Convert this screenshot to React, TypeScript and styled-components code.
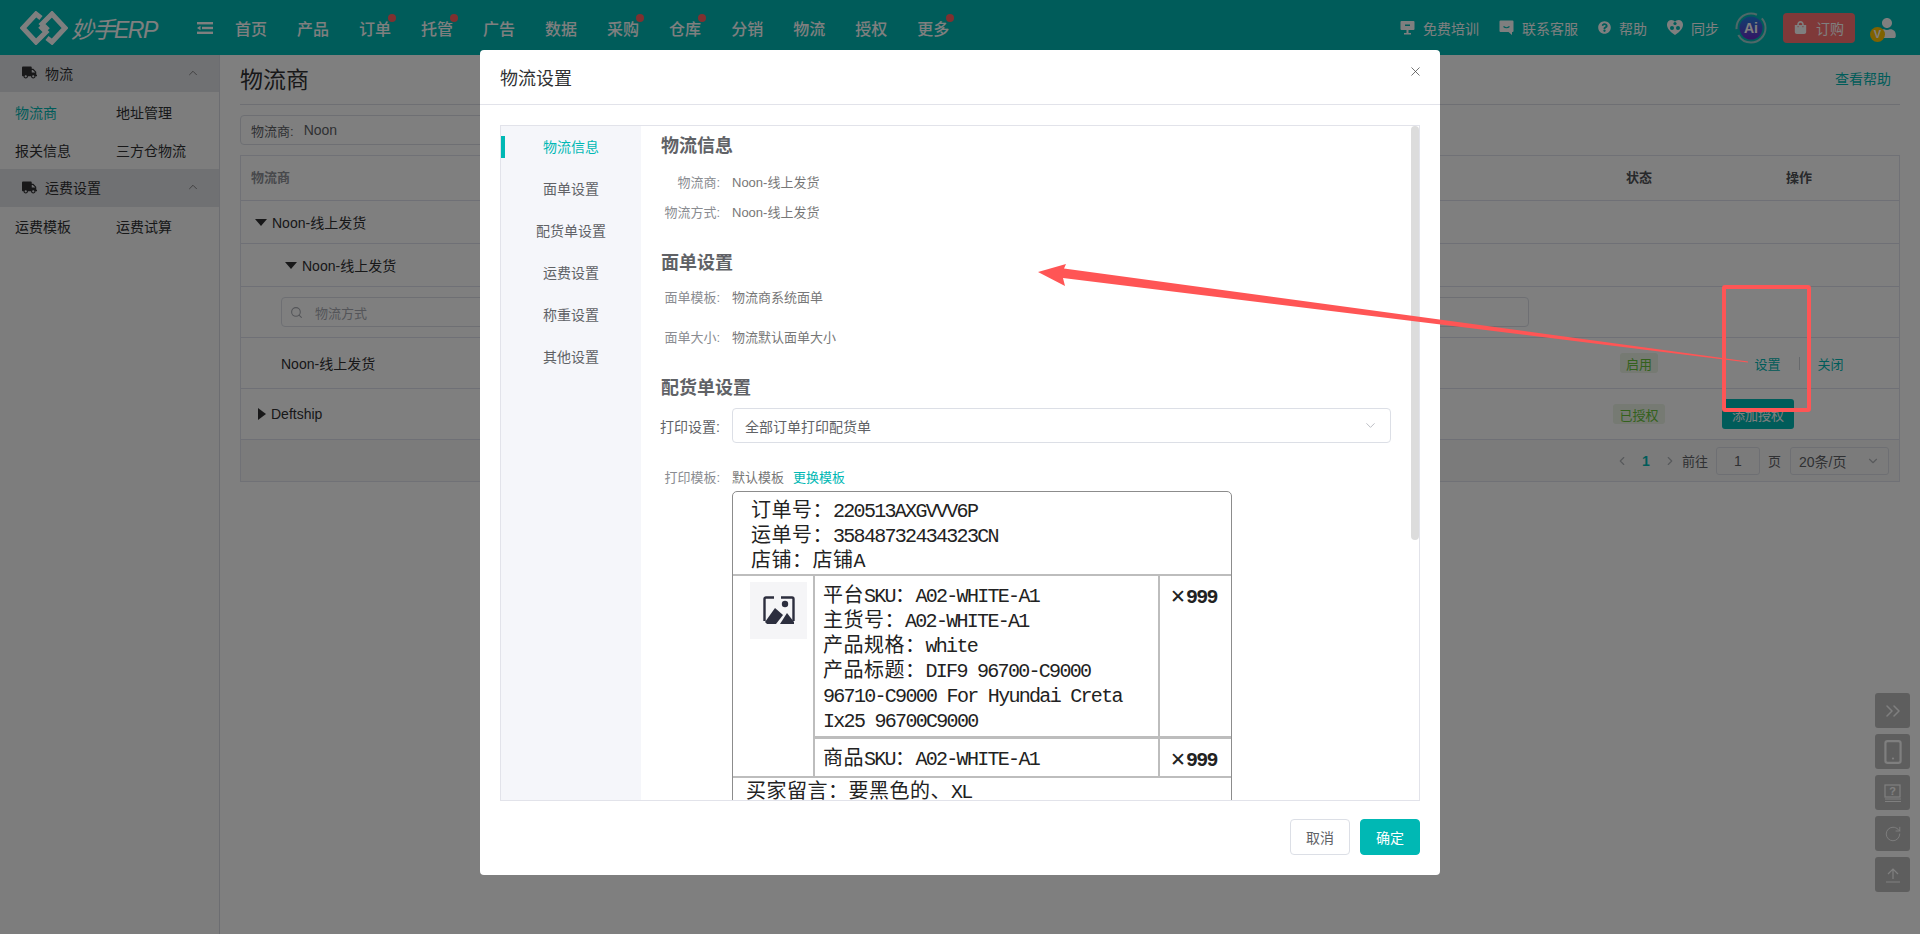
import React from "react";
import styled, { createGlobalStyle } from "styled-components";
import {
	ChevronDown,
	ChevronLeft,
	ChevronRight,
	ChevronUp,
	ChevronsRight,
	RotateCw,
	Search,
	Smartphone,
	X,
} from "lucide-react";
import {
	FaQuestionCircle,
	FaShoppingBag,
	FaTruck,
	FaUser,
} from "react-icons/fa";

const TEAL = "#00b8b4";
const FONT = `"Liberation Sans", "Noto Sans CJK SC", sans-serif`;
const COLON = "\uff1a";

const GlobalStyle = createGlobalStyle`
	html, body {
		margin: 0;
		height: 100%;
		overflow: hidden;
		background: #fff;
		font-family: ${FONT};
	}
	* {
		box-sizing: border-box;
	}
`;

const Page = styled.div`
	position: relative;
	width: 1920px;
	height: 934px;
	overflow: hidden;
	display: flex;
	flex-direction: column;
`;

/* top bar */
const TopBar = styled.header`
	height: 55px;
	flex: none;
	display: flex;
	align-items: center;
	padding-left: 20px;
	background: ${TEAL};
	color: #fff;
`;

const Logo = styled.div`
	width: 177px;
	display: flex;
	align-items: center;
	gap: 3px;
`;

const LogoText = styled.span`
	font-size: 23px;
	font-style: italic;
	letter-spacing: -1.5px;
`;

const Menu = styled.nav`
	display: flex;
	align-self: stretch;
	margin-left: 7px;
`;

const MenuItem = styled.div<{ $dot?: boolean }>`
	position: relative;
	display: flex;
	align-items: center;
	padding: 0 15px;
	font-size: 16px;
	font-weight: 500;

	${(p) =>
		p.$dot &&
		`&::after {
			content: "";
			position: absolute;
			top: 14px;
			right: 10px;
			width: 8px;
			height: 8px;
			border-radius: 50%;
			background: #ff6060;
		}`}
`;

const Tools = styled.div`
	margin-left: auto;
	display: flex;
	align-items: center;
	padding-right: 23px;
`;

const Tool = styled.div`
	display: flex;
	align-items: center;
	gap: 8px;
	margin-right: 20px;
	font-size: 14px;
`;

const AiSlot = styled.div`
	display: flex;
	margin-left: -4px;
`;

const OrderButton = styled.div`
	width: 72px;
	height: 30px;
	margin: 0 15px 0 16px;
	display: flex;
	align-items: center;
	justify-content: center;
	gap: 9px;
	border-radius: 4px;
	background: #ff7272;
	font-size: 14px;
`;

const UserBox = styled.div`
	position: relative;
	width: 27px;
	height: 30px;
	display: flex;
	justify-content: flex-end;
	align-items: center;
`;

const VipBadge = styled.span`
	position: absolute;
	left: 0;
	bottom: 1px;
	width: 15px;
	height: 15px;
	border-radius: 50%;
	background: #ffc400;
	font-size: 11px;
	font-weight: 700;
	line-height: 15px;
	text-align: center;
`;

/* page behind the dialog */
const Body = styled.div`
	flex: 1;
	display: flex;
	min-height: 0;
`;

const Sidebar = styled.aside`
	width: 220px;
	flex: none;
	background: #fafafa;
	border-right: 1px solid #d9dbe2;
`;

const SideHead = styled.div<{ $h: number }>`
	height: ${(p) => p.$h}px;
	display: flex;
	align-items: center;
	padding: 0 19px 2px 22px;
	gap: 8px;
	background: #e1e2e6;
	color: #303133;
	font-size: 14px;

	svg:last-child {
		margin-left: auto;
		color: #666;
	}
`;

const SideGrid = styled.div<{ $pt: number }>`
	display: grid;
	grid-template-columns: 101px 101px;
	grid-auto-rows: 38px;
	padding: ${(p) => p.$pt}px 0 0 15px;
`;

const SideLink = styled.div<{ $active?: boolean }>`
	display: flex;
	align-items: center;
	font-size: 14px;
	color: ${(p) => (p.$active ? TEAL : "#303133")};
`;

const Main = styled.main`
	flex: 1;
	min-width: 0;
	padding: 0 20px;
`;

const TitleBar = styled.div`
	height: 50px;
	display: flex;
	align-items: center;
	justify-content: space-between;
	padding: 0 9px 3px 0;
	border-bottom: 1px solid #dcdfe6;
`;

const PageTitle = styled.h1`
	margin: 0;
	font-size: 23px;
	font-weight: 400;
	color: #303133;
`;

const HelpLink = styled.span`
	font-size: 14px;
	color: ${TEAL};
`;

const FilterBox = styled.div`
	width: 400px;
	height: 30px;
	margin-top: 10px;
	display: flex;
	align-items: center;
	padding-left: 10px;
	gap: 10px;
	border: 1px solid #dcdfe6;
	border-radius: 4px;
	font-size: 13px;
	color: #606266;
`;

const FilterValue = styled.span`
	font-size: 14px;
`;

const Table = styled.div`
	margin-top: 10px;
	border: 1px solid #e1e3ec;
`;

const Row = styled.div<{ $h: number }>`
	height: ${(p) => p.$h}px;
	display: flex;
	align-items: center;
	border-bottom: 1px solid #dfe1ec;
	font-size: 14px;
	color: #303133;
`;

const HeadRow = styled(Row)`
	padding-bottom: 3px;
`;

const NameCell = styled.div<{ $indent: number }>`
	flex: 1;
	min-width: 0;
	display: flex;
	align-items: center;
	gap: 5px;
	padding-left: ${(p) => p.$indent}px;
`;

const HeadName = styled(NameCell)`
	font-size: 13px;
	font-weight: 700;
	color: #909399;
`;

const StatusCell = styled.div`
	width: 120px;
	flex: none;
	display: flex;
	justify-content: center;
`;

const OpsCell = styled.div<{ $start?: boolean }>`
	width: 200px;
	flex: none;
	display: flex;
	align-items: center;
	justify-content: ${(p) => (p.$start ? "flex-start" : "center")};
	padding-left: ${(p) => (p.$start ? 23 : 0)}px;
`;

const HeadCell = styled.span`
	font-size: 13px;
	font-weight: 700;
	color: #505257;
`;

const Caret = styled.span<{ $dir: "down" | "right" }>`
	width: 0;
	height: 0;
	border-style: solid;
	${(p) =>
		p.$dir === "down"
			? `border-width: 7px 6px 0 6px;
				border-color: #303133 transparent transparent transparent;`
			: `border-width: 6px 0 6px 8px;
				border-color: transparent transparent transparent #303133;`}
`;

const SearchBox = styled.div`
	width: 1248px;
	height: 30px;
	display: flex;
	align-items: center;
	gap: 12px;
	padding-left: 8px;
	border: 1px solid #dcdfe6;
	border-radius: 4px;
	font-size: 13px;
	color: #a8abb2;
`;

const Tag = styled.span`
	height: 20px;
	padding: 0 6px;
	display: flex;
	align-items: center;
	border-radius: 3px;
	background: #ecf5e6;
	color: #67c23a;
	font-size: 13px;
`;

const OpLink = styled.span`
	font-size: 13px;
	color: ${TEAL};
`;

const OpDivider = styled.span`
	width: 1px;
	height: 13px;
	margin: 0 18px;
	background: #cfd2d8;
`;

const TealButton = styled.button`
	width: 72px;
	height: 30px;
	padding: 0;
	border: none;
	border-radius: 3px;
	background: ${TEAL};
	color: #fff;
	font-family: ${FONT};
	font-size: 13px;
`;

const Pager = styled.div`
	height: 41px;
	display: flex;
	align-items: center;
	justify-content: flex-end;
	padding-right: 10px;
	background: #f7f7f7;
	font-size: 13px;
	color: #606266;
`;

const PageNum = styled.span`
	width: 34px;
	text-align: center;
	font-size: 14px;
	font-weight: 700;
	color: ${TEAL};
`;

const PagerText = styled.span<{ $ml: number }>`
	margin-left: ${(p) => p.$ml}px;
`;

const PagerBox = styled.div<{ $w: number; $ml: number }>`
	width: ${(p) => p.$w}px;
	height: 28px;
	margin-left: ${(p) => p.$ml}px;
	display: flex;
	align-items: center;
	justify-content: space-between;
	padding: 0 8px;
	border: 1px solid #dcdfe6;
	border-radius: 3px;
	font-size: 14px;

	svg {
		color: #b0b3b8;
	}
`;

const PagerInput = styled(PagerBox)`
	justify-content: center;
`;

/* floating side buttons */
const FloatBar = styled.div`
	position: absolute;
	top: 693px;
	right: 10px;
	display: flex;
	flex-direction: column;
	gap: 6px;
`;

const FloatButton = styled.div`
	width: 35px;
	height: 35px;
	display: flex;
	align-items: center;
	justify-content: center;
	border-radius: 3px;
	background: #bdbdbd;
	color: #fff;
`;

/* dialog */
const Mask = styled.div`
	position: absolute;
	inset: 0;
	display: flex;
	justify-content: center;
	padding-top: 50px;
	background: rgba(0, 0, 0, 0.5);
`;

const Dialog = styled.section`
	width: 960px;
	height: 825px;
	display: flex;
	flex-direction: column;
	border-radius: 4px;
	background: #fff;
`;

const DialogHead = styled.div`
	height: 55px;
	flex: none;
	display: flex;
	align-items: center;
	justify-content: space-between;
	padding: 0 17px 0 20px;
	border-bottom: 1px solid #e2e3ea;
	font-size: 18px;
	color: #303133;

	svg {
		color: #444;
		margin-top: -12px;
	}
`;

const DialogBody = styled.div`
	padding: 20px 20px 0;
`;

const Panel = styled.div`
	position: relative;
	height: 676px;
	display: flex;
	overflow: hidden;
	border: 1px solid #e2e3ea;
`;

const SideNav = styled.div`
	width: 140px;
	flex: none;
	background: #f5f6fa;
`;

const SideNavItem = styled.div<{ $active?: boolean }>`
	position: relative;
	height: 42px;
	line-height: 42px;
	text-align: center;
	font-size: 14px;
	color: ${(p) => (p.$active ? TEAL : "#606266")};

	${(p) =>
		p.$active &&
		`&::before {
			content: "";
			position: absolute;
			left: 0;
			top: 10px;
			width: 4px;
			height: 22px;
			background: ${TEAL};
		}`}
`;

const Content = styled.div`
	flex: 1;
	min-width: 0;
	padding: 8px 0 0 20px;
`;

const SectionTitle = styled.h3<{ $mt: number; $mb: number }>`
	margin: ${(p) => p.$mt}px 0 ${(p) => p.$mb}px;
	font-size: 18px;
	font-weight: 700;
	line-height: 24px;
	color: #606266;
`;

const Field = styled.div<{ $h: number }>`
	height: ${(p) => p.$h}px;
	display: flex;
	align-items: center;
	margin-left: -1px;
	font-size: 13px;
	color: #777;
`;

const FieldLabel = styled.span`
	width: 60px;
	flex: none;
	margin-right: 12px;
	text-align: right;
	white-space: nowrap;
	color: #8a8c91;
`;

const SelectRow = styled.div`
	height: 35px;
	display: flex;
	align-items: center;
	margin: 8px 0 0 -1px;
`;

const SelectLabel = styled(FieldLabel)`
	font-size: 14px;
	color: #606266;
`;

const SelectBox = styled.div`
	width: 659px;
	height: 35px;
	display: flex;
	align-items: center;
	justify-content: space-between;
	padding: 0 12px;
	border: 1px solid #dcdfe6;
	border-radius: 4px;
	font-size: 14px;
	color: #606266;

	svg {
		color: #b6b9bf;
	}
`;

const TemplateField = styled(Field)`
	margin-top: 23px;
`;

const ChangeLink = styled.span`
	margin-left: 9px;
	color: ${TEAL};
`;

/* print template preview */
const Template = styled.div`
	width: 500px;
	margin: 5px 0 0 71px;
	border: 1px solid #8c8c8c;
	border-radius: 5px;
	font-family: "Liberation Mono", "Noto Sans CJK SC", monospace;
	font-size: 20px;
	line-height: 25px;
	color: #222;
`;

const TplHead = styled.div`
	height: 84px;
	padding: 7px 0 0 18px;
	border-bottom: 2px solid #bdbdbd;
`;

const TplLine = styled.div`
	white-space: nowrap;
	letter-spacing: 0.5px;
`;

const Latin = styled.span`
	letter-spacing: -1.7px;
`;

const TplBody = styled.div`
	display: flex;
	border-bottom: 2px solid #bdbdbd;
`;

const TplThumb = styled.div`
	width: 82px;
	flex: none;
	padding: 6px 0 0 17px;
	border-right: 2px solid #bdbdbd;
`;

const ThumbBox = styled.div`
	width: 57px;
	height: 57px;
	display: flex;
	align-items: center;
	justify-content: center;
	background: #f5f5f7;
`;

const TplItems = styled.div`
	flex: 1;
	min-width: 0;
`;

const TplItem = styled.div<{ $h: number; $line?: boolean }>`
	height: ${(p) => p.$h}px;
	display: flex;
	border-bottom: ${(p) => (p.$line ? "3px solid #bdbdbd" : "none")};
`;

const TplLines = styled.div`
	width: 345px;
	flex: none;
	padding: 8px 0 0 8px;
	border-right: 2px solid #bdbdbd;
`;

const TplQty = styled.div`
	padding: 8px 0 0 10px;
	font-weight: 700;
	white-space: nowrap;
`;

const QtyMark = styled.span`
	font-family: "DejaVu Sans", sans-serif;
	font-size: 19px;
	font-weight: 400;
`;

const TplNote = styled.div`
	height: 60px;
	padding: 2px 0 0 13px;
	letter-spacing: 0.5px;
`;

const ScrollThumb = styled.div`
	position: absolute;
	top: 0;
	right: 0;
	width: 8px;
	height: 414px;
	border-radius: 4px;
	background: #dcdcdc;
`;

const DialogFoot = styled.div`
	display: flex;
	justify-content: flex-end;
	gap: 10px;
	padding: 18px 20px 0;
`;

const FootButton = styled.button<{ $primary?: boolean }>`
	width: 60px;
	height: 36px;
	padding: 0;
	border-radius: 4px;
	border: 1px solid ${(p) => (p.$primary ? TEAL : "#dcdfe6")};
	background: ${(p) => (p.$primary ? TEAL : "#fff")};
	color: ${(p) => (p.$primary ? "#fff" : "#606266")};
	font-family: ${FONT};
	font-size: 14px;
`;

/* red markup drawn on top of the screenshot */
const Markup = styled.svg`
	position: absolute;
	left: 0;
	top: 0;
	pointer-events: none;
`;

const LogoMark = () => (
	<svg width="48" height="34" viewBox="0 0 48 34" fill="none" stroke="#fff" strokeWidth="5">
		<path d="M21 7 L16 3 L3 17 L16 31 L26 21 L20 15" />
		<path d="M27 27 L32 31 L45 17 L32 3 L22 13 L28 19" />
	</svg>
);

const ListIcon = () => (
	<svg width="16" height="12" viewBox="0 0 16 12" fill="#fff">
		<rect x="0" y="0" width="16" height="2.4" />
		<rect x="5" y="4.8" width="11" height="2.4" />
		<rect x="0" y="9.6" width="16" height="2.4" />
		<path d="M0 6 L3.5 3.8 V8.2 Z" />
	</svg>
);

const TrainIcon = () => (
	<svg width="15" height="15" viewBox="0 0 15 15" fill="#fff">
		<path d="M1.5 1h12a1 1 0 0 1 1 1v7a1 1 0 0 1-1 1h-12a1 1 0 0 1-1-1V2a1 1 0 0 1 1-1z" />
		<rect x="6.5" y="10" width="2" height="3" />
		<rect x="4" y="13" width="7" height="1.5" />
		<rect x="5" y="4.5" width="5" height="1.5" fill={TEAL} />
	</svg>
);

const ChatIcon = () => (
	<svg width="15" height="15" viewBox="0 0 15 15" fill="#fff">
		<path d="M1.5 0.5h12a1 1 0 0 1 1 1v9.5a1 1 0 0 1-1 1H13v3l-3.5-3h-8a1 1 0 0 1-1-1V1.5a1 1 0 0 1 1-1z" />
		<path d="M4.5 6.5q3 2.5 6 0" stroke={TEAL} strokeWidth="1.2" fill="none" />
	</svg>
);

const SyncIcon = () => (
	<svg width="16" height="15" viewBox="0 0 16 15" fill="#fff">
		<path d="M8 15C2 11 0 8 0 4.5 0 2 2 0 4.5 0 6 0 7.2.7 8 1.8 8.8.7 10 0 11.500 0 14 0 16 2 16 4.500 16 8 14 11 8 15z" />
		<circle cx="5" cy="8" r="2" fill={TEAL} />
		<circle cx="11" cy="8" r="2" fill={TEAL} />
		<circle cx="8" cy="3.500" r="1.600" fill={TEAL} />
	</svg>
);

const AiBadge = () => (
	<svg width="32" height="32" viewBox="0 0 32 32">
		<defs>
			<linearGradient id="aiFill" x1="0" y1="0" x2="0" y2="1">
				<stop offset="0" stopColor="#1f7fe0" />
				<stop offset="1" stopColor="#6a2cc8" />
			</linearGradient>
		</defs>
		<circle cx="16" cy="16" r="14.500" fill="none" stroke="#9fd0d0" strokeWidth="2" strokeDasharray="38 6 30 6" />
		<circle cx="16" cy="16" r="11.500" fill="url(#aiFill)" />
		<text x="16" y="21" textAnchor="middle" fontSize="14" fontWeight="700" fill="#fff" fontFamily="Liberation Sans">
			Ai
		</text>
	</svg>
);

const GuideIcon = () => (
	<svg width="20" height="20" viewBox="0 0 20 20" fill="none" stroke="#fff" strokeWidth="1.200">
		<rect x="2" y="2" width="15" height="12" />
		<path d="M2 16h16M2 18.500h16" />
		<text x="9.500" y="12" textAnchor="middle" fontSize="11" fontWeight="700" fill="#fff" stroke="none" fontFamily="Liberation Sans">
			?
		</text>
	</svg>
);

const UploadIcon = () => (
	<svg width="20" height="20" viewBox="0 0 20 20" fill="none" stroke="#fff" strokeWidth="1.200">
		<path d="M10 14V4M5 9l5-5 5 5M3 17h14" />
	</svg>
);

const PictureIcon = () => (
	<svg width="32" height="29" viewBox="0 0 32 29" fill="none">
		<path d="M11 1.500H3A1.500 1.500 0 0 0 1.500 3v22" stroke="#2c2e3e" strokeWidth="2.400" />
		<path d="M18 1.500h11A1.500 1.500 0 0 1 30.500 3v22" stroke="#2c2e3e" strokeWidth="2.400" />
		<path d="M2 26 L12 12 L20 19 L13 28 H4 Z" fill="#2c2e3e" />
		<path d="M17 28 L24 17 L31 26 V28 Z" fill="#2c2e3e" />
		<circle cx="22" cy="8" r="3.200" fill="#2c2e3e" />
	</svg>
);

const menuItems = [
	{ label: "首页" },
	{ label: "产品" },
	{ label: "订单", dot: true },
	{ label: "托管", dot: true },
	{ label: "广告" },
	{ label: "数据" },
	{ label: "采购", dot: true },
	{ label: "仓库", dot: true },
	{ label: "分销" },
	{ label: "物流" },
	{ label: "授权" },
	{ label: "更多", dot: true },
];

const navItems = ["物流信息", "面单设置", "配货单设置", "运费设置", "称重设置", "其他设置"];

const App = () => {
	return (
		<Page>
			<GlobalStyle />
			<TopBar>
				<Logo>
					<LogoMark />
					<LogoText>妙手ERP</LogoText>
				</Logo>
				<ListIcon />
				<Menu>
					{menuItems.map((m) => (
						<MenuItem key={m.label} $dot={m.dot}>
							{m.label}
						</MenuItem>
					))}
				</Menu>
				<Tools>
					<Tool>
						<TrainIcon />
						免费培训
					</Tool>
					<Tool>
						<ChatIcon />
						联系客服
					</Tool>
					<Tool>
						<FaQuestionCircle size={13} />
						帮助
					</Tool>
					<Tool>
						<SyncIcon />
						同步
					</Tool>
					<AiSlot>
						<AiBadge />
					</AiSlot>
					<OrderButton>
						<FaShoppingBag size={13} />
						订购
					</OrderButton>
					<UserBox>
						<FaUser size={20} />
						<VipBadge>V</VipBadge>
					</UserBox>
				</Tools>
			</TopBar>

			<Body>
				<Sidebar>
					<SideHead $h={37}>
						<FaTruck size={15} />
						物流
						<ChevronUp size={14} strokeWidth={1.3} />
					</SideHead>
					<SideGrid $pt={1}>
						<SideLink $active>物流商</SideLink>
						<SideLink>地址管理</SideLink>
						<SideLink>报关信息</SideLink>
						<SideLink>三方仓物流</SideLink>
					</SideGrid>
					<SideHead $h={38}>
						<FaTruck size={15} />
						运费设置
						<ChevronUp size={14} strokeWidth={1.3} />
					</SideHead>
					<SideGrid $pt={0}>
						<SideLink>运费模板</SideLink>
						<SideLink>运费试算</SideLink>
					</SideGrid>
				</Sidebar>

				<Main>
					<TitleBar>
						<PageTitle>物流商</PageTitle>
						<HelpLink>查看帮助</HelpLink>
					</TitleBar>
					<FilterBox>
						<span>物流商:</span>
						<FilterValue>Noon</FilterValue>
					</FilterBox>
					<Table>
						<HeadRow $h={45}>
							<HeadName $indent={10}>物流商</HeadName>
							<StatusCell>
								<HeadCell>状态</HeadCell>
							</StatusCell>
							<OpsCell>
								<HeadCell>操作</HeadCell>
							</OpsCell>
						</HeadRow>
						<Row $h={43}>
							<NameCell $indent={14}>
								<Caret $dir="down" />
								Noon-线上发货
							</NameCell>
						</Row>
						<Row $h={43}>
							<NameCell $indent={44}>
								<Caret $dir="down" />
								Noon-线上发货
							</NameCell>
						</Row>
						<Row $h={51}>
							<NameCell $indent={40}>
								<SearchBox>
									<Search size={13} color="#a8abb2" />
									物流方式
								</SearchBox>
							</NameCell>
						</Row>
						<Row $h={51}>
							<NameCell $indent={40}>Noon-线上发货</NameCell>
							<StatusCell>
								<Tag>启用</Tag>
							</StatusCell>
							<OpsCell>
								<OpLink>设置</OpLink>
								<OpDivider />
								<OpLink>关闭</OpLink>
							</OpsCell>
						</Row>
						<Row $h={51}>
							<NameCell $indent={17}>
								<Caret $dir="right" />
								Deftship
							</NameCell>
							<StatusCell>
								<Tag>已授权</Tag>
							</StatusCell>
							<OpsCell $start>
								<TealButton>添加授权</TealButton>
							</OpsCell>
						</Row>
						<Pager>
							<ChevronLeft size={14} color="#b0b3b8" />
							<PageNum>1</PageNum>
							<ChevronRight size={14} color="#b0b3b8" />
							<PagerText $ml={5}>前往</PagerText>
							<PagerInput $w={44} $ml={8}>
								1
							</PagerInput>
							<PagerText $ml={8}>页</PagerText>
							<PagerBox $w={99} $ml={9}>
								20条/页
								<ChevronDown size={14} />
							</PagerBox>
						</Pager>
					</Table>
				</Main>
			</Body>

			<FloatBar>
				<FloatButton>
					<ChevronsRight size={24} strokeWidth={1.5} />
				</FloatButton>
				<FloatButton>
					<Smartphone size={26} strokeWidth={2} />
				</FloatButton>
				<FloatButton>
					<GuideIcon />
				</FloatButton>
				<FloatButton>
					<RotateCw size={18} strokeWidth={1.2} />
				</FloatButton>
				<FloatButton>
					<UploadIcon />
				</FloatButton>
			</FloatBar>

			<Mask>
				<Dialog>
					<DialogHead>
						物流设置
						<X size={15} strokeWidth={1.2} />
					</DialogHead>
					<DialogBody>
						<Panel>
							<SideNav>
								{navItems.map((n, i) => (
									<SideNavItem key={n} $active={i === 0}>
										{n}
									</SideNavItem>
								))}
							</SideNav>
							<Content>
								<SectionTitle $mt={0} $mb={8}>
									物流信息
								</SectionTitle>
								<Field $h={30}>
									<FieldLabel>物流商:</FieldLabel>
									Noon-线上发货
								</Field>
								<Field $h={30}>
									<FieldLabel>物流方式:</FieldLabel>
									Noon-线上发货
								</Field>
								<SectionTitle $mt={25} $mb={1}>
									面单设置
								</SectionTitle>
								<Field $h={40}>
									<FieldLabel>面单模板:</FieldLabel>
									物流商系统面单
								</Field>
								<Field $h={40}>
									<FieldLabel>面单大小:</FieldLabel>
									物流默认面单大小
								</Field>
								<SectionTitle $mt={20} $mb={0}>
									配货单设置
								</SectionTitle>
								<SelectRow>
									<SelectLabel>打印设置:</SelectLabel>
									<SelectBox>
										全部订单打印配货单
										<ChevronDown size={15} strokeWidth={1.5} />
									</SelectBox>
								</SelectRow>
								<TemplateField $h={20}>
									<FieldLabel>打印模板:</FieldLabel>
									默认模板
									<ChangeLink>更换模板</ChangeLink>
								</TemplateField>
								<Template>
									<TplHead>
										<TplLine>
											订单号{COLON}<Latin>220513AXGVVV6P</Latin>
										</TplLine>
										<TplLine>
											运单号{COLON}<Latin>35848732434323CN</Latin>
										</TplLine>
										<TplLine>
											店铺{COLON}店铺<Latin>A</Latin>
										</TplLine>
									</TplHead>
									<TplBody>
										<TplThumb>
											<ThumbBox>
												<PictureIcon />
											</ThumbBox>
										</TplThumb>
										<TplItems>
											<TplItem $h={163} $line>
												<TplLines>
													<TplLine>
														平台<Latin>SKU</Latin>{COLON}<Latin>A02-WHITE-A1</Latin>
													</TplLine>
													<TplLine>
														主货号{COLON}<Latin>A02-WHITE-A1</Latin>
													</TplLine>
													<TplLine>
														产品规格{COLON}<Latin>white</Latin>
													</TplLine>
													<TplLine>
														产品标题{COLON}<Latin>DIF9 96700-C9000</Latin>
													</TplLine>
													<TplLine>
														<Latin>96710-C9000 For Hyundai Creta</Latin>
													</TplLine>
													<TplLine>
														<Latin>Ix25 96700C9000</Latin>
													</TplLine>
												</TplLines>
												<TplQty>
													<QtyMark>✕</QtyMark>
													<Latin>999</Latin>
												</TplQty>
											</TplItem>
											<TplItem $h={37}>
												<TplLines>
													<TplLine>
														商品<Latin>SKU</Latin>{COLON}<Latin>A02-WHITE-A1</Latin>
													</TplLine>
												</TplLines>
												<TplQty>
													<QtyMark>✕</QtyMark>
													<Latin>999</Latin>
												</TplQty>
											</TplItem>
										</TplItems>
									</TplBody>
									<TplNote>
										买家留言{COLON}要黑色的、<Latin>XL</Latin>
									</TplNote>
								</Template>
							</Content>
							<ScrollThumb />
						</Panel>
					</DialogBody>
					<DialogFoot>
						<FootButton>取消</FootButton>
						<FootButton $primary>确定</FootButton>
					</DialogFoot>
				</Dialog>
			</Mask>

			<Markup width="1920" height="934" viewBox="0 0 1920 934">
				<rect x="1724" y="287" width="85" height="123" fill="none" stroke="#ff5555" strokeWidth="4" rx="1" />
				<polygon
					points="1038,272 1066,264 1064,268.500 1748,361.500 1748,362.500 1063,278 1065,286"
					fill="#ff5555"
				/>
			</Markup>
		</Page>
	);
};

export default App;
